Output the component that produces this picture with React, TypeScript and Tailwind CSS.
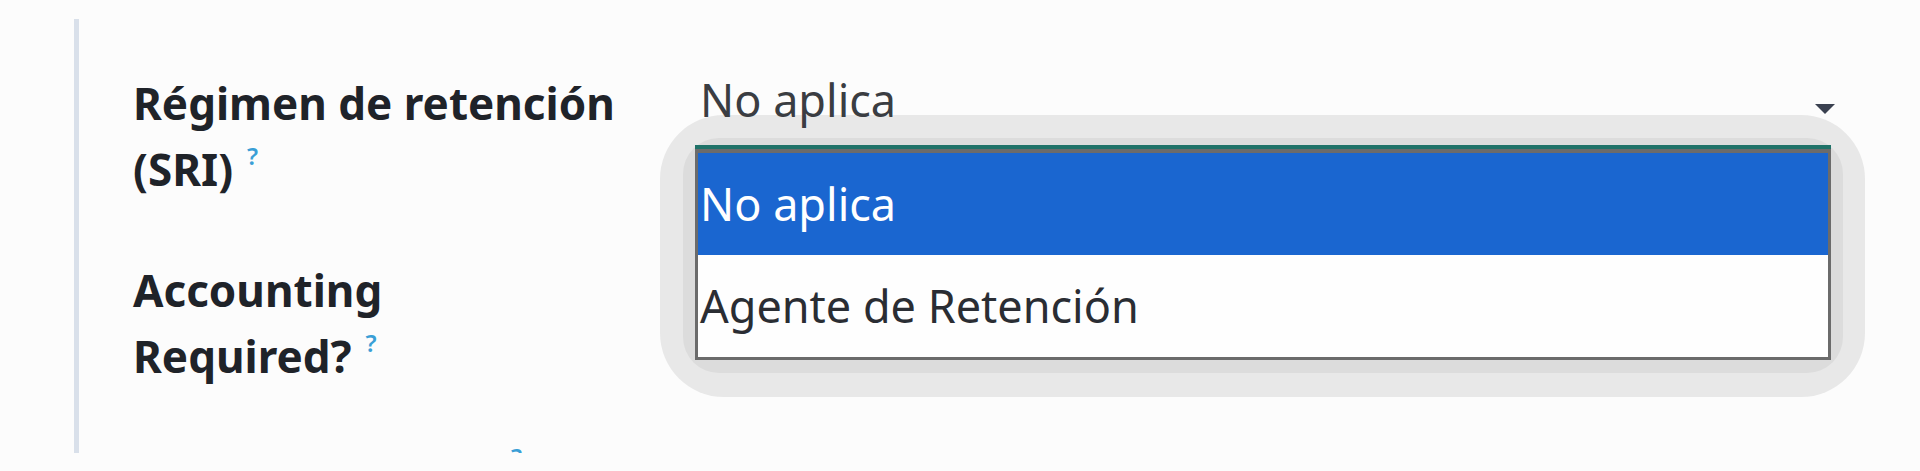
import React from 'react'

// help marker next to a field label
function Help() {
  return (
    <sup className="relative -top-[21px] ml-[14px] text-[24px] font-semibold text-[#3a9fd6]">?</sup>
  )
}

function Label({ lines, className = '' }: { lines: string[]; className?: string }) {
  return (
    <div className={'text-[44px] font-bold text-[#1f2329] ' + className}>
      {lines.map((line, i) => (
        <div key={i}>
          {line}
          {i === lines.length - 1 && <Help />}
        </div>
      ))}
    </div>
  )
}

const options = ['No aplica', 'Agente de Retención']

function Dropdown() {
  return (
    <div className="absolute left-[660px] top-[115px] rounded-[64px] bg-[#e8e8e8] pb-[24px] pl-[23px] pr-[22px] pt-[23px]">
      <div className="rounded-[36px] bg-[#dcdcdc] px-[12px] pb-[13px] pt-[7px]">
        <div className="w-[1136px] border-t-[4px] border-[#1f7268]">
          <div className="border-x-[3px] border-b-[3px] border-t-[4px] border-[#6b6b6b] bg-[#fefefe] text-[45px]">
            {options.map((o, i) => (
              <div
                key={o}
                className={
                  i === 0
                    ? 'flex h-[102px] items-center bg-[#1a66d0] pl-[2px] text-white'
                    : 'flex h-[102px] items-center pl-[2px] text-[#2a2d33]'
                }
              >
                {o}
              </div>
            ))}
          </div>
        </div>
      </div>
    </div>
  )
}

export default function App() {
  return (
    <div className="relative h-[471px] w-[1920px] overflow-hidden bg-[#fcfcfc] font-['Noto_Sans',sans-serif]">
      <div className="ml-[74px] mt-[19px] h-[434px] overflow-hidden border-l-[5px] border-[#d9e0ea] pl-[54px] pt-[51px]">
        <div className="grid grid-cols-[565px_1140px] gap-y-[55px] leading-[66px]">
          <Label lines={['Régimen de retención', '(SRI)']} />
          <div className="flex items-start justify-between">
            <span className="relative z-10 -mt-[3px] pl-[2px] text-[45px] text-[#3a3d42]">No aplica</span>
            <span className="mr-[3px] mt-[34px] h-0 w-0 border-x-[10px] border-t-[10px] border-x-transparent border-t-[#3a4150]" />
          </div>
          <Label lines={['Accounting', 'Required?']} />
          <div />
          <Label lines={['Special Taxpayer']} className="-mt-[7px]" />
          <div />
        </div>
      </div>
      <Dropdown />
    </div>
  )
}
